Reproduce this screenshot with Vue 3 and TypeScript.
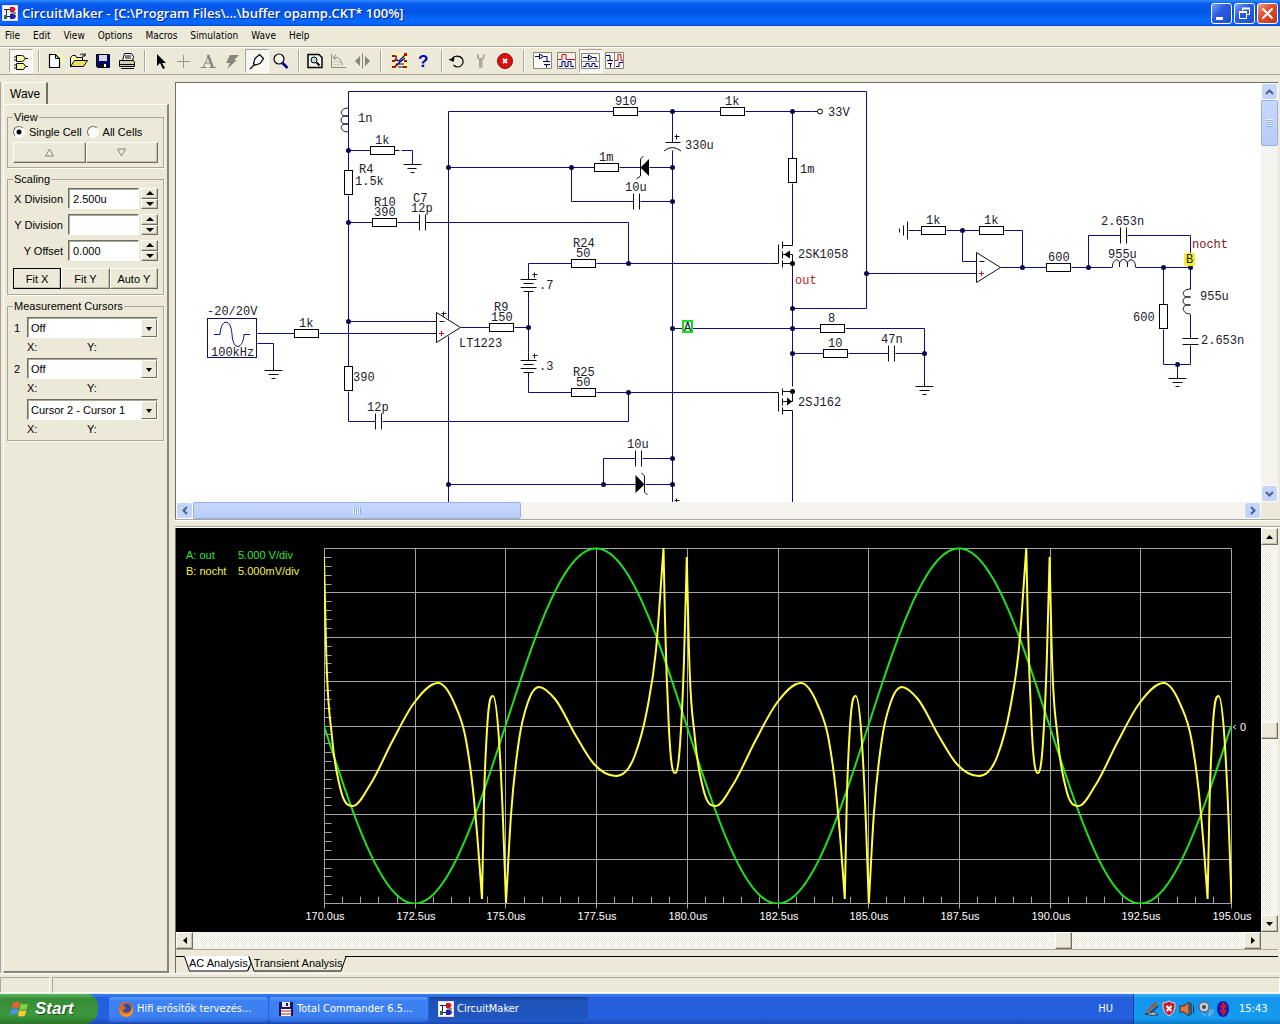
<script setup lang="ts">
import { ref } from 'vue'

interface Tool { name: string; art?: string; down?: boolean; sep?: 'narrow' | 'wide' }
interface Label { x: number; y: number; t: string; c?: string }

const menus = ['File', 'Edit', 'View', 'Options', 'Macros', 'Simulation', 'Wave', 'Help']

const tools: Tool[] = [
  { name: 'Parts', down: true, art: '<path d="M3 6h3M3 9h3M3 14h3M3 17h3M14 7.500h3M14 15.500h3" stroke="#000"/><path d="M5.500 4.500h5c2 0 3.500 1.500 3.500 3s-1.500 3-3.500 3h-5z" fill="#ffff9c" stroke="#000"/><path d="M5.500 12.500h7l2 3-2 3h-7z" fill="#ffff9c" stroke="#000"/>' },
  { name: 's1', sep: 'narrow' },
  { name: 'New', art: '<path d="M10 2l8 3v8z" fill="#ffffa8"/><path d="M4.500 3.500h6l4 4v9h-10z" fill="#fff" stroke="#000" stroke-width="1.200"/><path d="M10.500 3.500v4h4" fill="none" stroke="#000"/>' },
  { name: 'Open', art: '<path d="M1.500 15.500v-9l2-2h3l1 2h6v3" fill="#ffff9c" stroke="#000"/><path d="M1.500 15.500l4-6h13l-4 6z" fill="#e4e060" stroke="#000"/><path d="M11 4c2-2 4-1 5 1m0-3v3h-3" fill="none" stroke="#000"/>' },
  { name: 'Save', art: '<path d="M3.500 3.500h13v13h-12l-1-1z" fill="#000090" stroke="#000"/><path d="M6 4h8v6H6z" fill="#d8d8e8"/><path d="M6 12h8v4H6z" fill="#111"/><path d="M11 13h2v3h-2z" fill="#fff"/>' },
  { name: 'Print', art: '<path d="M5.500 9.500l2-7h7l2 3-1 4z" fill="#fff" stroke="#000"/><path d="M2.500 9.500h14l1 2v4h-15z" fill="#d0cdbc" stroke="#000"/><path d="M4 17.500h13M3 13.500h14M8 5h6M8 7h6" stroke="#000"/><path d="M12 12h2" stroke="#dd0"/>' },
  { name: 's2', sep: 'narrow' },
  { name: 'Arrow', art: '<path d="M6 3v12l3-3 3 6 2-1-3-5h4z" fill="#000"/>' },
  { name: 'Wire', art: '<path d="M8.500 4v13M2 10.500h13" stroke="#9a9788"/>' },
  { name: 'Text', art: '<path d="M9.500 4l-5 12M6 12h6M1.500 16.500h6M10 16.500h7" stroke="#88867a" fill="none"/><path d="M9 4l4.500 12" stroke="#88867a" stroke-width="2.500"/>' },
  { name: 'Delete', art: '<path d="M7 4h9l-5 5h3l-10 9 3-6H3z" fill="#88867a"/>' },
  { name: 'Probe', down: true, art: '<path d="M3 18l5-5M12.500 3.500l4 4-3.500 5-5 1.500-1.500-1.500 1.500-5z" fill="#fff" stroke="#000" stroke-width="1.200"/>' },
  { name: 'Zoom', art: '<circle cx="8" cy="8" r="5" fill="#f6f6ee" stroke="#000" stroke-width="1.200"/><path d="M11.500 12l5 5" stroke="#000090" stroke-width="2.600"/>' },
  { name: 's3', sep: 'narrow' },
  { name: 'Fit', art: '<path d="M3 3.500h11l3 3v10H3z" fill="#f4f2e6" stroke="#000" stroke-width="1.500"/><circle cx="9" cy="9" r="3" fill="#a8e4e4" stroke="#000"/><path d="M11.500 11.500l3 3" stroke="#000" stroke-width="2"/>' },
  { name: 'Rotate', art: '<path d="M2.500 3v13.500H17M4 6.500c6-1 9 3 9 8M4 6.500l3-3m-3 3l3 2" stroke="#8f8c7e" fill="none"/><path d="M5 10h5v4H5z" fill="none" stroke="#b5b2a2" stroke-dasharray="1 1"/>' },
  { name: 'Mirror', art: '<path d="M7 5v10l-5-5zM12 5v10l5-5z" fill="#88867a"/><path d="M9.500 2.500v15" stroke="#88867a"/>' },
  { name: 's4', sep: 'wide' },
  { name: 'Simulate', art: '<path d="M2 2h16v16H2z" fill="#fff6b0"/><path d="M4 5h2v4l3 1 6-6M4 9h4M4 16l11-9M8 16h6M6 13h8" stroke="#000090" fill="none" stroke-width="1.200"/><path d="M2 4h3v2H2zM2 9h3v2H2zM2 15h4v2H2zM14 2h3v3h-3zM14 9h3v2h-3zM13 15h4v2h-4z" fill="#b01010"/><path d="M4 5l3 1M4 10l3-1M5 16l4-3" stroke="#b01010"/>' },
  { name: 'Help', art: '<text x="4" y="16" font-family="Liberation Sans, sans-serif" font-size="17" font-weight="bold" fill="#0000b0">?</text>' },
  { name: 's5', sep: 'narrow' },
  { name: 'Reset', art: '<path d="M4 7.500C6 4.500 12 4 14.500 8c2 4-1 8-5 8-2 0-3-1-4-2" fill="none" stroke="#000" stroke-width="1.200"/><path d="M0.500 8.500l6-2-1 4.500z" fill="#000"/>' },
  { name: 'Step', art: '<path d="M5 3v4l2 2v7q1.500 2 3.500 0V9l2-2V3l-2 1v3H7V4z" fill="#aca899"/>' },
  { name: 'Stop', art: '<circle cx="9" cy="10" r="7.500" fill="#d81010" stroke="#8c0808"/><path d="M7 8l4 4M11 8l-4 4" stroke="#fff" stroke-width="1.800"/>' },
  { name: 's6', sep: 'wide' },
  { name: 'Schematic', art: '<path d="M.500 1.500h18v16H.500z" fill="#f8f7f2" stroke="#88867a"/><path d="M2 5.500h4M6.500 3v5l4-2.500zM11 5.500h3v5M10 10.500h7M11 13.500h6M13.500 13.500v3" fill="none" stroke="#000060"/>' },
  { name: 'Waves', art: '<path d="M.500 1.500h18v16H.500z" fill="#f0eee6" stroke="#88867a"/><path d="M1 8.500h4v-5h4v5h9" fill="none" stroke="#c01818"/><path d="M2 15.500h3v-5h3v5h3v-5h3v5h3" fill="none" stroke="#000080"/>' },
  { name: 'Split across', down: true, art: '<path d="M.500 2.500h18v15H.500zM1 10.500h17" fill="#f8f7f2" stroke="#88867a"/><path d="M2 6.500h5M7.500 4v5l4-2.500zM11 6.500h4v3" fill="none" stroke="#000060"/><path d="M2 15.500h3v-3h3v3h3v-3h3v3h3" fill="none" stroke="#000080"/>' },
  { name: 'Split down', art: '<path d="M.500 1.500h18v16H.500zM9.500 2v15" fill="#f8f7f2" stroke="#88867a"/><path d="M1 4.500h4v5M2 9.500h6M3 12.500h4M5.500 12.500v4" fill="none" stroke="#000060"/><path d="M10 9.500h3v-6h3v6h2" fill="none" stroke="#c01818"/><path d="M11 15.500h3v-4h4" fill="none" stroke="#000080"/>' },
]

const wires = `M348 150V91H866V308H792 M348 150H370 M401 150H412V164 M348 150V170 M348 195V366 M348 391V421H375
M348 222H372 M397 222H419 M426 222H628V263 M448 319V111H613 M448 336V502 M638 111H720 M745 111H812 M672 111V142 M672 150V502
M448 167H594 M619 167H640 M649 167H672 M571 167V201H633 M640 201H672 M792 111V158 M792 183V238 M792 263V386 M792 417V502
M528 272V263H571 M596 263H770 M528 298V352 M528 378V392H571 M596 392H770 M628 392V421H382 M460 327H489 M514 327H528
M348 321H431 M257 333H294 M319 333H431 M257 343H273V365 M672 328H820 M845 328H924V382 M792 353H823 M848 353H888 M895 353H924
M448 484H635 M645 484H672 M603 484V458H635 M642 458H672 M866 273H976
M915 230H921 M946 230H979 M1004 230H1022V267 M962 230V261H976 M1000 267H1046 M1071 267H1112 M1088 267V235H1120 M1127 235H1190V289
M1135 267H1190 M1163 267V304 M1163 329V364H1190V345 M1190 314V338 M1177 364V374`

const parts = `M394 150H399 M403 164H421 M407 168H416 M410 172H414 M419 214V230 M425 214V230 M413 222H419 M425 222H431
M264 370H282 M268 374H278 M271 378H275 M273 365V370 M375 413V429 M381 413V429
M520 279H536 M523 283H533 M520 287H536 M523 291H533 M528 272V279 M528 291V298 M520 360H536 M523 364H533 M520 368H536 M523 372H533 M528 352V360 M528 372V378
M532 274H537 M534 272V277 M532 355H537 M534 353V358 M665 142H680 M674 136H679 M676 134V139 M674 500H679 M676 498V502
M633 193V209 M639 193V209 M635 450V466 M641 450V466 M888 345V361 M894 345V361 M915 386H933 M919 390H929 M922 394H926 M924 381V386
M907 221V239 M903 225V235 M899 228V232 M908 230H915 M1120 227V243 M1126 227V243 M1182 338H1198 M1182 344H1198
M1168 378H1186 M1172 382H1182 M1175 386H1179 M1177 374V378
M770 263H778V244 M782 241V248 M782 251V258 M782 260V267 M782 245H792V238 M782 254H792V263H782
M770 392H778V411 M782 388V395 M782 398V405 M782 407V414 M782 391H792V401H782 M782 410H792V417
M431 321H436 M431 333H436 M441 313H446 M443 311V316 M439 321H444 M979 261H984 M812 111H817`

const curves = `M348.500 108c-9 0-9 8-3 8h3-3c-6 0-6 8 0 8h3-3c-6 0-6 8 3 8 M1190.500 289c-9 0-9 8-3 8h3-3c-6 0-6 8 0 8h3-3c-6 0-6 9 3 9
M1112.500 267c0-9 7-9 7-3v3-3c0-6 8-6 8 0v3-3c0-6 8-6 8 3 M664 151q8-7 17 0 M640.500 176V159l3-3M640.500 176l-4 3 M644.500 476v16l3 3M644.500 476l-3-3`

const resistorsH = [[370, 146], [372, 218], [613, 107], [720, 107], [594, 163], [571, 259], [571, 388], [489, 323], [294, 329], [820, 324], [823, 349], [921, 226], [979, 226], [1046, 263]]
const resistorsV = [[344, 170], [344, 366], [788, 158], [1159, 304]]
const dots = [[348, 150], [348, 222], [348, 321], [448, 167], [448, 484], [571, 167], [672, 111], [672, 167], [672, 201], [672, 328], [672, 458], [672, 484], [603, 484], [628, 263], [628, 392], [528, 327], [792, 111], [792, 308], [792, 328], [792, 353], [866, 273], [924, 353], [962, 230], [1022, 267], [1088, 267], [1163, 267], [1190, 267], [1177, 364]]

const labels: Label[] = [
  { x: 358, y: 122, t: '1n' }, { x: 375, y: 144, t: '1k' }, { x: 359, y: 173, t: 'R4' }, { x: 355, y: 185, t: '1.5k' },
  { x: 374, y: 206, t: 'R10' }, { x: 374, y: 216, t: '390' }, { x: 413, y: 202, t: 'C7' }, { x: 411, y: 212, t: '12p' },
  { x: 207, y: 315, t: '-20/20V' }, { x: 211, y: 356, t: '100kHz' }, { x: 299, y: 327, t: '1k' }, { x: 459, y: 347, t: 'LT1223' },
  { x: 494, y: 311, t: 'R9' }, { x: 491, y: 321, t: '150' }, { x: 539, y: 289, t: '.7' }, { x: 539, y: 370, t: '.3' },
  { x: 573, y: 247, t: 'R24' }, { x: 576, y: 257, t: '50' }, { x: 573, y: 376, t: 'R25' }, { x: 576, y: 386, t: '50' },
  { x: 367, y: 411, t: '12p' }, { x: 353, y: 381, t: '390' }, { x: 685, y: 149, t: '330u' }, { x: 599, y: 161, t: '1m' },
  { x: 625, y: 191, t: '10u' }, { x: 615, y: 105, t: '910' }, { x: 725, y: 105, t: '1k' }, { x: 828, y: 116, t: '33V' },
  { x: 800, y: 173, t: '1m' }, { x: 798, y: 258, t: '2SK1058' }, { x: 795, y: 284, t: 'out', c: 'red' }, { x: 798, y: 406, t: '2SJ162' },
  { x: 828, y: 322, t: '8' }, { x: 828, y: 347, t: '10' }, { x: 881, y: 343, t: '47n' }, { x: 627, y: 448, t: '10u' },
  { x: 926, y: 224, t: '1k' }, { x: 984, y: 224, t: '1k' }, { x: 1048, y: 261, t: '600' }, { x: 1101, y: 225, t: '2.653n' },
  { x: 1108, y: 258, t: '955u' }, { x: 1192, y: 248, t: 'nocht', c: 'maroon' }, { x: 1133, y: 321, t: '600' },
  { x: 1200, y: 300, t: '955u' }, { x: 1201, y: 344, t: '2.653n' },
]

// Plot geometry: ten time divisions by eight voltage divisions.
const X0 = 324
const X1 = 1231
const Y0 = 548
const Y1 = 903
const PERIOD = 362.8
const MID = 726
const timeTicks = Array.from({ length: 11 }, (_, i) => ({ x: Math.round(X0 + (i * (X1 - X0)) / 10), t: (170 + i * 2.5).toFixed(1) + 'us' }))
const rows = Array.from({ length: 9 }, (_, i) => Math.round(Y0 + (i * (Y1 - Y0)) / 8))
const minorX = Array.from({ length: 51 }, (_, i) => Math.round(X0 + (i * (X1 - X0)) / 50))
const minorY = Array.from({ length: 41 }, (_, i) => Math.round(Y0 + (i * (Y1 - Y0)) / 40))
const gridPath = timeTicks.map(k => `M${k.x} ${Y0}V${Y1 + 5}`).join('') + rows.map(y => `M${X0} ${y}H${X1}`).join('') +
  minorX.map(x => `M${x} ${Y1}v-7`).join('') + minorY.map(y => `M${X0} ${y}h7`).join('')

const outTrace = Array.from({ length: X1 - X0 + 1 }, (_, i) => `${X0 + i},${(MID + 177.5 * Math.sin((2 * Math.PI * i) / PERIOD)).toFixed(1)}`).join(' ')

// One period of trace B; the spikes (third value true) are sharp corners.
const cycle: [number, number, boolean?][] = [
  [0, 557, true], [2, 645], [8, 737], [16, 787], [29, 806], [46, 785], [69, 740], [90, 703], [114, 683],
  [131, 705], [142, 740], [149, 790], [154, 845], [158, 899, true], [160, 800], [163, 730], [169, 696],
  [175, 740], [179, 820], [182, 903, true], [187, 815], [195, 740], [204, 702], [215, 687], [231, 699],
  [252, 736], [270, 764], [292, 776], [311, 755], [323, 710], [332, 650], [339.5, 548, true], [341, 620], [345, 730],
  [351, 773], [356, 745], [360, 660],
]
function smooth(): string {
  const pts: [number, number, boolean][] = []
  for (let n = 0; n < 3; n++) cycle.forEach(([x, y, sharp]) => pts.push([X0 + x + n * PERIOD, y, !!sharp]))
  const slope = pts.map((p, i) => {
    const a = pts[i - 1]
    const b = pts[i + 1]
    if (!a || !b || p[2]) return null
    const h1 = p[0] - a[0]
    const h2 = b[0] - p[0]
    const m = (p[1] - a[1]) / h1
    const k = (b[1] - p[1]) / h2
    return m * k <= 0 ? 0 : (m * h2 + k * h1) / (h1 + h2)
  })
  let d = `M${pts[0][0]} ${pts[0][1]}`
  for (let i = 1; i < pts.length; i++) {
    const a = pts[i - 1]
    const b = pts[i]
    const h = (b[0] - a[0]) / 3
    const lin = (b[1] - a[1]) / (b[0] - a[0])
    d += `C${(a[0] + h).toFixed(1)} ${(a[1] + (slope[i - 1] ?? lin) * h).toFixed(1)} ${(b[0] - h).toFixed(1)} ${(b[1] - (slope[i] ?? lin) * h).toFixed(1)} ${b[0].toFixed(1)} ${b[1]}`
  }
  return d
}
const nochtTrace = smooth()

const cell = ref('single')
const xDiv = ref('2.500u')
const yDiv = ref('')
const yOff = ref('0.000')
const spinners = [
  { id: 'xdiv', label: 'X Division', model: xDiv },
  { id: 'ydiv', label: 'Y Division', model: yDiv },
  { id: 'yoff', label: 'Y Offset', model: yOff },
]
</script>

<template>
  <div class="window">
    <header class="title">
      <svg class="app-icon" width="16" height="16" viewBox="0 0 16 16"><path d="M0 0h16v16H0z" fill="#fbd0f0" /><path d="M1 1h14v14H1z" fill="#fff" /><path d="M2 4.500h7M2 11.500h7M4.500 4v8M9 8h5" stroke="#222" fill="none" /><path d="M8 2h4q3 2 0 5H8z" fill="#d01830" /><path d="M8 9h4q4 2 0 5H8z" fill="#2020b0" /><path d="M2 10h3v4H2z" fill="#207040" /></svg>
      <h1>CircuitMaker - [C:\Program Files\...\buffer opamp.CKT* 100%]</h1>
      <div class="win-buttons">
        <button aria-label="Minimize"><svg width="19" height="19"><path d="M4 14.500h7" stroke="#fff" stroke-width="3" /></svg></button>
        <button aria-label="Restore"><svg width="19" height="19"><path d="M7.500 7V4.500h7v6H12M4.500 8.500h7v6h-7z" fill="none" stroke="#fff" /><path d="M4 8h8M7 4.500h8" stroke="#fff" stroke-width="2" /></svg></button>
        <button class="close" aria-label="Close"><svg width="19" height="19"><path d="M4.500 4.500l10 10M14.500 4.500l-10 10" stroke="#fff" stroke-width="2" /></svg></button>
      </div>
    </header>
    <nav class="menu"><a v-for="m in menus" :key="m" href="#">{{ m }}</a></nav>
    <div class="toolbar">
      <template v-for="t in tools" :key="t.name">
        <span v-if="t.sep" class="sep" :class="t.sep"></span>
        <button v-else :class="{ down: t.down }" :aria-label="t.name"><svg width="20" height="20" viewBox="0 0 20 20" v-html="t.art"></svg></button>
      </template>
    </div>

    <main>
      <aside>
        <div class="tab">Wave</div>
        <div class="tab-body">
          <fieldset class="view">
            <legend>View</legend>
            <div class="radios">
              <label><input v-model="cell" type="radio" value="single" name="cell">Single Cell</label>
              <label><input v-model="cell" type="radio" value="all" name="cell">All Cells</label>
            </div>
            <div class="pair">
              <button class="btn" aria-label="Up"><svg width="11" height="9"><path d="M5.500 1l4 7h-8z" fill="none" stroke="#88867a" /></svg></button>
              <button class="btn" aria-label="Down"><svg width="11" height="9"><path d="M5.500 8l4-7h-8z" fill="none" stroke="#88867a" /></svg></button>
            </div>
          </fieldset>
          <fieldset class="scaling">
            <legend>Scaling</legend>
            <div v-for="s in spinners" :key="s.id" class="spin-row">
              <label :for="s.id">{{ s.label }}</label>
              <input :id="s.id" v-model="s.model.value" type="text">
              <span class="spin">
                <button class="btn" aria-label="Increase"><svg width="8" height="4"><path d="M4 0l4 4H0z" /></svg></button>
                <button class="btn" aria-label="Decrease"><svg width="8" height="4"><path d="M4 4l4-4H0z" /></svg></button>
              </span>
            </div>
            <div class="fit"><button class="btn default">Fit X</button><button class="btn">Fit Y</button><button class="btn">Auto Y</button></div>
          </fieldset>
          <fieldset class="cursors">
            <legend>Measurement Cursors</legend>
            <div class="combo"><label for="c1">1</label><span><select id="c1"><option>Off</option></select><i></i></span></div>
            <div class="xy"><span>X:</span><span>Y:</span></div>
            <div class="combo"><label for="c2">2</label><span><select id="c2"><option>Off</option></select><i></i></span></div>
            <div class="xy"><span>X:</span><span>Y:</span></div>
            <div class="combo last"><label for="c3"></label><span><select id="c3" aria-label="Difference"><option>Cursor 2 - Cursor 1</option></select><i></i></span></div>
            <div class="xy"><span>X:</span><span>Y:</span></div>
          </fieldset>
        </div>
      </aside>

      <section class="work">
        <div class="pane schematic">
          <svg class="canvas" width="1085" height="418" viewBox="176 84 1085 418">
            <path :d="wires" transform="translate(.5 .5)" class="wire" />
            <path :d="parts" transform="translate(.5 .5)" class="part" />
            <path :d="curves" class="part" />
            <rect v-for="(r, i) in resistorsH" :key="'h' + i" :x="r[0] + 0.5" :y="r[1] + 0.5" width="24" height="8" class="body" />
            <rect v-for="(r, i) in resistorsV" :key="'v' + i" :x="r[0] + 0.5" :y="r[1] + 0.5" width="8" height="24" class="body" />
            <path d="M436.500 312.500v30l24-15z M976.500 252.500v30l24-15z" class="part" />
            <path d="M439 333.500h5M441.500 331v5M979 273.500h5M981.500 271v5" stroke="#d01020" />
            <path d="M640.500 167.500l8.500-8.500v17z M644.500 484.500l-9-9.500v18z M784 254.500l6-4v8z M792 401.500l-5-4v8z" />
            <rect x="207.500" y="318.500" width="49" height="39" fill="none" stroke="#10105a" />
            <path d="M214 334.500h6C221 318 231 318 232 334.500S243 350 244 334.500h6" class="wire" />
            <circle v-for="(d, i) in dots" :key="'d' + i" :cx="d[0] + 0.5" :cy="d[1] + 0.5" r="2.500" fill="#08084a" />
            <circle cx="792.500" cy="263.500" r="2.500" /><circle cx="792.500" cy="391.500" r="2.500" />
            <circle cx="820" cy="111.500" r="2.500" class="body" />
            <text v-for="(l, i) in labels" :key="'t' + i" :x="l.x" :y="l.y" :class="l.c">{{ l.t }}</text>
            <rect x="683" y="321" width="9" height="11" fill="#e4f8e0" stroke="#18d830" stroke-width="2" />
            <text x="684" y="331">A</text>
            <rect x="1184" y="253" width="11" height="13" fill="#f4ee30" />
            <text x="1186" y="263">B</text>
          </svg>
          <div class="xp-v">
            <button aria-label="Scroll up"><svg width="9" height="6"><path d="M1 5l3.500-3.500L8 5" fill="none" stroke="#4d6185" stroke-width="2" /></svg></button>
            <div class="thumb"><i></i></div>
            <button class="end" aria-label="Scroll down"><svg width="9" height="6"><path d="M1 1l3.500 3.500L8 1" fill="none" stroke="#4d6185" stroke-width="2" /></svg></button>
          </div>
          <div class="xp-h">
            <button aria-label="Scroll left"><svg width="6" height="9"><path d="M5 1L1.500 4.500 5 8" fill="none" stroke="#4d6185" stroke-width="2" /></svg></button>
            <div class="thumb"><i></i></div>
            <button class="end" aria-label="Scroll right"><svg width="6" height="9"><path d="M1 1l3.500 3.500L1 8" fill="none" stroke="#4d6185" stroke-width="2" /></svg></button>
          </div>
          <div class="corner"></div>
        </div>
        <div class="splitter"></div>
        <div class="pane scope">
          <div class="plot">
            <svg viewBox="176 528 1085 404">
              <path :d="gridPath" transform="translate(.5 .5)" stroke="#a4a4a4" fill="none" />
              <clipPath id="plot-area"><rect :x="X0" :y="Y0 - 1" :width="X1 - X0 + 1" :height="Y1 - Y0 + 2" /></clipPath>
              <g clip-path="url(#plot-area)" fill="none" stroke-width="2" stroke-linejoin="bevel">
                <polyline :points="outTrace" stroke="#20e020" />
                <path :d="nochtTrace" stroke="#ffff40" />
              </g>
              <g fill="#30e040"><text x="186" y="559">A: out</text><text x="238" y="559">5.000 V/div</text></g>
              <g fill="#f4f040"><text x="186" y="575">B: nocht</text><text x="238" y="575">5.000mV/div</text></g>
              <g fill="#fff">
                <text v-for="k in timeTicks" :key="k.t" :x="k.x + 1" y="920" text-anchor="middle">{{ k.t }}</text>
                <text x="1240" y="731">0</text>
              </g>
              <path d="M1236 725l-3 2 3 2" stroke="#ccc" fill="none" />
            </svg>
          </div>
          <div class="cl-v">
            <button class="btn" aria-label="Up"><svg width="7" height="4"><path d="M3.500 0L7 4H0z" /></svg></button>
            <div class="btn cl-thumb"></div>
            <button class="btn" aria-label="Down"><svg width="7" height="4"><path d="M3.500 4L7 0H0z" /></svg></button>
          </div>
          <div class="cl-h">
            <button class="btn" aria-label="Left"><svg width="4" height="7"><path d="M0 3.500L4 0v7z" /></svg></button>
            <div class="btn cl-thumb"></div>
            <button class="btn" aria-label="Right"><svg width="4" height="7"><path d="M4 3.500L0 0v7z" /></svg></button>
          </div>
        </div>
        <div class="sheets">
          <svg width="174" height="20"><path d="M8.500 1l5 15.500h58l4-15.500z" fill="#fff" /><path d="M0 1.500h8.500l5 14.500h58l2-5M73 1.500l5 14.500h87l5-14.500h6" fill="none" stroke="#000" /><path d="M73 1.500l2 7-3 7" fill="none" stroke="#000" /></svg>
          <a href="#">AC Analysis</a><a href="#">Transient Analysis</a>
          <span class="rule"></span>
        </div>
      </section>
    </main>

    <div class="status"><span></span><span></span></div>

    <footer class="taskbar">
      <button class="start">
        <svg width="20" height="20" viewBox="0 0 20 20"><path d="M3 4q4-3 7 0L8.500 9.500q-3-2-7 0z" fill="#f0602c" /><path d="M11 4.500q3 2 7 0L16.500 10q-4 2-7 0z" fill="#8cd040" /><path d="M1.300 10.500q4-2 7 0L7 16q-3-2-7 0z" fill="#4c90f4" /><path d="M9.300 11q3 2 7 0L15 16.500q-4 2-7 0z" fill="#fccc30" /></svg>
        Start
      </button>
      <button class="task">
        <svg width="16" height="16" viewBox="0 0 16 16"><circle cx="8" cy="8" r="7" fill="#e86414" /><circle cx="8.500" cy="7" r="4.500" fill="#2c50a8" /><path d="M1 6q2 8 8 7 5-1 5-7 3 6-2 9-7 3-10-3z" fill="#f89420" /><path d="M2 3l3 1 3 3-4 3z" fill="#e86414" /></svg>
        <span>Hifi erősítők tervezés...</span>
      </button>
      <button class="task">
        <svg width="16" height="16" viewBox="0 0 16 16"><path d="M1 1h14v14H1z" fill="#181860" /><path d="M4 1h8v5H4z" fill="#e8e8f0" /><path d="M8 2h2v3H8z" fill="#181860" /><path d="M3 8h10v7H3z" fill="#fff" /><path d="M3 10h10M3 13h10" stroke="#c02020" /></svg>
        <span>Total Commander 6.5...</span>
      </button>
      <button class="task active">
        <svg width="16" height="16" viewBox="0 0 16 16"><path d="M0 0h16v16H0z" fill="#fbd0f0" /><path d="M1 1h14v14H1z" fill="#fff" /><path d="M2 4.500h7M2 11.500h7M4.500 4v8M9 8h5" stroke="#222" fill="none" /><path d="M8 2h4q3 2 0 5H8z" fill="#d01830" /><path d="M8 9h4q4 2 0 5H8z" fill="#2020b0" /><path d="M2 10h3v4H2z" fill="#207040" /></svg>
        <span>CircuitMaker</span>
      </button>
      <span class="lang">HU</span>
      <div class="tray">
        <svg width="88" height="18" viewBox="0 0 88 18">
          <path d="M1 14l9-2 4 3H5z" fill="#ddd" stroke="#333" /><path d="M3 12l9-9" stroke="#e03030" stroke-width="2" /><path d="M4 13L14 4" stroke="#30b040" stroke-width="2" /><path d="M6 13l8-7" stroke="#2040c0" stroke-width="2" />
          <path d="M19 3q3 0 6-2 3 2 6 2 1 9-6 13-7-4-6-13z" fill="#c81c30" stroke="#ddd" /><path d="M22.500 6l5 5M27.500 6l-5 5" stroke="#fff" stroke-width="2" />
          <path d="M36 6h4l5-4v14l-5-4h-4z" fill="#e07838" stroke="#502010" /><path d="M47 3v12M49.500 5v8" stroke="#222" />
          <circle cx="60" cy="7" r="5" fill="#c8ccd4" stroke="#555" /><circle cx="60" cy="7" r="2" fill="#444" /><path d="M58 13l4 3M66 9q1 3-2 6M69 9q0 5-4 7" stroke="#88a8e0" fill="none" stroke-width="1.500" />
          <ellipse cx="79" cy="9" rx="6" ry="8" fill="#1818b0" /><path d="M76 5.500l6 6-3 3V3l3 3-6 6" fill="none" stroke="#e01828" stroke-width="1.500" />
        </svg>
        <time>15:43</time>
      </div>
    </footer>
  </div>
</template>

<style>
body { margin: 0; background: #ece9d8; }
</style>

<style scoped>
* { box-sizing: border-box; }
.window { display: flex; flex-direction: column; min-height: 100vh; background: #ece9d8; color: #000; font: 11px/14px "Liberation Sans", Arial, sans-serif; overflow: hidden; }
button { font: inherit; color: inherit; padding: 0; margin: 0; }
svg { display: block; flex: none; }
a { color: inherit; text-decoration: none; }

.title { display: flex; align-items: center; gap: 4px; height: 26px; padding: 0 2px; background: linear-gradient(#2c8cff 0, #0a5cf0 4px, #0054e4 12px, #0668fc 20px, #0666fc 24px, #0044c8 26px); color: #fff; }
.title h1 { flex: 1; margin: 0; font: 600 13px/20px "Open Sans", "Noto Sans", sans-serif; text-shadow: 1px 1px #0a2a90; white-space: nowrap; }
.win-buttons { display: flex; gap: 2px; }
.win-buttons button { width: 21px; height: 21px; border: 1px solid #fff; border-radius: 3px; background: linear-gradient(135deg, #7aa4f4, #2c5ce4 40%, #1c4ccc); }
.win-buttons .close { background: linear-gradient(135deg, #f0a088, #dc5030 40%, #c03818); }

.menu { display: flex; gap: 13px; height: 21px; padding: 0 5px; border-bottom: 1px solid #aca899; font: 10px/19px "DejaVu Sans Condensed", "DejaVu Sans", sans-serif; }
.toolbar { display: flex; align-items: center; height: 28px; padding-left: 9px; border-top: 1px solid #fff; border-bottom: 1px solid #aca899; }
.toolbar button { display: grid; place-items: center; width: 24px; height: 24px; border: 1px solid transparent; background: none; }
.toolbar .down { border-color: #aca899 #fff #fff #aca899; background: #f7f6f0; }
.sep { width: 10px; height: 22px; background: linear-gradient(90deg, transparent 5px, #aca899 5px 6px, #fff 6px 7px, transparent 7px); }
.sep.wide { width: 13px; }

main { display: flex; flex: 1; gap: 6px; padding-top: 7px; }
aside { display: flex; flex-direction: column; width: 169px; padding-left: 2px; border-left: 1px solid #aca899; }
.tab { width: 45px; height: 22px; padding: 3px 6px; border: solid; border-width: 1px 2px 0 1px; border-color: #fff #716f64 #fff #fff; font-size: 12px; line-height: 16px; }
.tab-body { flex: 1; padding: 5px 3px; border: solid; border-width: 1px 2px 2px 1px; border-color: #fff #88867a #88867a #fff; }
fieldset { min-width: 0; margin: 0 0 4px; padding: 0 5px 4px; border: 1px solid #aca899; box-shadow: 1px 1px #fff; }
legend { padding: 0 1px; height: 14px; }
.radios { display: flex; gap: 5px; height: 15px; margin: 0 0 3px; }
.radios label { display: flex; align-items: center; gap: 4px; }
input[type=radio] { appearance: none; width: 12px; height: 12px; margin: 0; border: 1px solid; border-color: #716f64 #fff #fff #716f64; border-radius: 6px; background: #fff; }
input[type=radio]:checked { background: radial-gradient(#000 2px, #fff 3px); }
.btn { display: grid; place-items: center; border: 1px solid; border-color: #fff #716f64 #716f64 #fff; background: #ece9d8; box-shadow: inset -1px -1px #c4c0ae; }
.pair { display: flex; height: 21px; }
.pair .btn { flex: 1; }
.scaling { padding: 2px 5px 5px; }
.spin-row { display: flex; align-items: center; height: 21px; margin-bottom: 5px; }
.spin-row label { width: 50px; margin-right: 5px; text-align: right; white-space: nowrap; }
.spin-row input, select { appearance: none; height: 21px; min-width: 0; padding: 0 4px; border: 1px solid; border-color: #716f64 #fff #fff #716f64; border-radius: 0; box-shadow: inset 1px 1px #aca899; background: #fff; color: #000; font: inherit; }
.spin-row input { flex: 1; }
.spin { display: flex; flex-direction: column; width: 17px; height: 21px; margin-left: 2px; }
.spin .btn { flex: 1; }
.fit { display: flex; height: 21px; margin-top: 7px; }
.fit .btn { flex: 1; }
.fit .default { border-color: #000; }
.cursors { padding: 4px 5px 0; }
.combo { display: flex; align-items: center; height: 21px; }
.combo label { width: 14px; padding-left: 1px; }
.combo > span { position: relative; display: flex; flex: 1; }
.combo select { width: 100%; padding: 0 3px; }
.combo i { position: absolute; top: 2px; right: 1px; bottom: 1px; width: 16px; border: 1px solid; border-color: #fff #716f64 #716f64 #fff; background: #ece9d8; pointer-events: none; }
.combo i::after { content: ""; display: block; margin: 7px auto 0 4px; width: 0; border: 3px solid transparent; border-top: 4px solid #000; border-bottom: 0; }
.xy { display: flex; height: 20px; padding-left: 14px; line-height: 19px; }
.xy span { width: 60px; }

.work { display: flex; flex: 1; flex-direction: column; min-width: 0; }
.pane { display: grid; grid-template-columns: minmax(0, 1fr) 17px; margin-right: 2px; border-left: 1px solid #716f64; }
.schematic { grid-template-rows: 419px 17px; border-top: 1px solid #716f64; background: #fff; }
.canvas { max-width: 100%; padding-top: 1px; height: 419px; overflow: hidden; }
.canvas text { font: 12px "Liberation Mono", "Courier New", monospace; fill: #20202c; }
.canvas .red { fill: #c02020; }
.canvas .maroon { fill: #7a2028; }
.wire { fill: none; stroke: #10107a; }
.part { fill: none; stroke: #101010; }
.body { fill: #fff; stroke: #000; }
.corner { background: #ece9d8; }
.xp-v, .xp-h { display: flex; background: #f4f3ee; }
.xp-v { flex-direction: column; }
.xp-v button, .xp-h button { display: grid; place-items: center; width: 17px; height: 17px; border: 1px solid #fff; border-radius: 3px; background: #c4d5fc; }
.thumb { display: grid; place-items: center; border: 1px solid #98b0e8; border-radius: 2px; background: linear-gradient(#c8d8fe, #b8ccfa); }
.xp-v .thumb { height: 46px; }
.xp-h .thumb { width: 328px; }
.xp-v .thumb i { width: 7px; height: 8px; background: repeating-linear-gradient(#eef4fe 0 1px, #8cacf0 1px 2px); }
.xp-h .thumb i { width: 8px; height: 7px; background: repeating-linear-gradient(90deg, #eef4fe 0 1px, #8cacf0 1px 2px); }
.end { margin-top: auto; margin-left: auto; }
.xp-v .end { margin-left: 0; }
.xp-h .end { margin-top: 0; }
.splitter { height: 9px; padding-top: 6px; border-top: 1px solid #aca899; border-bottom: 1px solid #fff; box-shadow: inset 0 1px #fff, inset 0 -1px #aca899; }

.scope { flex: 1; grid-template-rows: 1fr 17px; border-bottom: 1px solid #aca899; }
.plot { background: #000; }
.plot svg { width: 100%; height: auto; }
.plot text { font: 11px "Liberation Sans", Arial, sans-serif; }
.cl-v, .cl-h { display: flex; justify-content: space-between; background: repeating-conic-gradient(#fff 0 25%, #ece9d8 0 50%) 0 0 / 2px 2px; }
.cl-v { flex-direction: column; }
.cl-v .btn, .cl-h .btn { width: 17px; height: 17px; }
.cl-h .cl-thumb { margin-right: auto; margin-left: calc(80% - 6px); }

.sheets { position: relative; display: flex; height: 23px; padding-top: 5px; border-left: 1px solid #716f64; }
.sheets a { position: relative; z-index: 1; line-height: 17px; white-space: nowrap; }
.sheets svg { margin-right: -161px; }
.sheets a + a { margin-left: 6px; }
.rule { flex: 1; height: 2px; margin: 0 2px 0 2px; border-bottom: 1px solid #000; }

.status { display: flex; gap: 2px; height: 21px; padding: 3px 0 1px; border-top: 1px solid #fff; }
.status span { border: 1px solid; border-color: #aca899 #fff #fff #aca899; }
.status span:first-child { width: 50px; }
.status span:last-child { flex: 1; }

.taskbar { display: flex; align-items: center; height: 30px; background: linear-gradient(#3c84f4, #245edc 4px, #2460e0 24px, #1c48b0); color: #fff; font: 11px/14px "DejaVu Sans Condensed", "DejaVu Sans", sans-serif; }
.start { display: flex; align-items: center; gap: 5px; width: 98px; height: 30px; margin-right: 11px; padding-left: 10px; border: 0; border-radius: 0 12px 14px 0; background: linear-gradient(#60b860, #388c38 5px, #3c983c 22px, #287428); font: italic bold 17px/24px "Liberation Sans", Arial, sans-serif; text-shadow: 1px 1px 1px #1c4c1c; }
.task { display: flex; align-items: center; gap: 3px; width: 159px; height: 25px; margin-right: 1px; padding-left: 9px; border: 0; border-radius: 3px; background: linear-gradient(#5c9cfc, #3c80f4 4px, #3c80f0 20px, #2c68dc); white-space: nowrap; }
.task.active { background: linear-gradient(#163c94, #1e52b8 4px, #2058c4); }
.lang { margin-left: auto; margin-right: 20px; }
.tray { display: flex; align-items: center; gap: 7px; width: 147px; height: 30px; padding-left: 10px; border-left: 1px solid #0c3c9c; background: linear-gradient(#40b8f8, #1494ec 4px, #149cf0 24px, #0c78c8); }
</style>
